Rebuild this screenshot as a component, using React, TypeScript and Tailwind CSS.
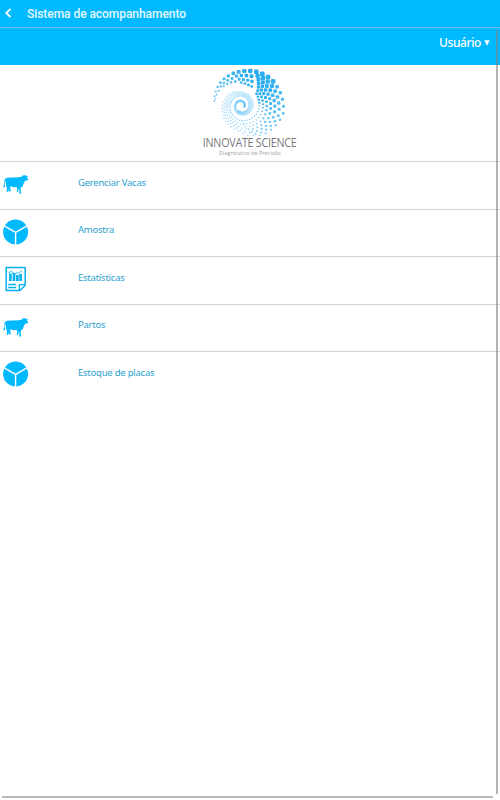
/**
 * Main menu of the herd tracking system
 */
import type { ReactNode } from 'react';

// Outer and inner radius of the logo spiral, by clockwise angle from the left tip
const OUTER = [[0, 27], [40, 31], [80, 34], [130, 40], [180, 43], [220, 37], [270, 25], [340, 19], [440, 13.5], [540, 12], [630, 9], [720, 6], [900, 4], [1080, 2]];
const INNER = [[0, 26], [40, 23], [80, 18], [130, 15], [180, 13], [270, 10], [360, 8], [440, 8], [540, 6], [630, 5], [720, 4], [900, 2.5], [1080, 1.5]];

function radiusAt(table: number[][], angle: number) {
  for (let i = 1; i < table.length; i++) {
    const [a0, r0] = table[i - 1];
    const [a1, r1] = table[i];
    if (angle <= a1) return r0 + ((r1 - r0) * (angle - a0)) / (a1 - a0);
  }
  return table[table.length - 1][1];
}

function spiralDots() {
  const dots: { x: number; y: number; s: number; o: number }[] = [];
  for (let a = 0; a <= 920; a += 9.5) {
    const outer = radiusAt(OUTER, a);
    const inner = radiusAt(INNER, a);
    const rows = a < 25 ? 2 : a < 60 ? 3 : a < 100 ? 4 : a < 230 ? 7 : a < 360 ? 5 : a < 640 ? 4 : 2;
    for (let k = 0; k < rows; k++) {
      const u = k / rows;
      const r = outer - (outer - inner) * u;
      const t = ((a + 190 + k * 4.75) * Math.PI) / 180;
      const peak = Math.exp(-Math.pow((a - 105) / 75, 2));
      const edge = a > 140 && a < 340 ? 0.6 + 0.4 * Math.sin(Math.PI * Math.min(1, u + 0.15)) : 1;
      const s = a < 300 ? Math.max(1.3, r * 0.12 * (0.45 + 0.6 * peak) * edge) : 1.5;
      dots.push({ x: 31 + r * Math.cos(t), y: 37.5 + r * Math.sin(t), s, o: a < 300 ? 0.5 + 0.42 * peak : 0.34 });
    }
  }
  return dots;
}

function Logo() {
  return (
    <svg className="h-[68px] w-[80px]" viewBox="0 0 80 68">
      {spiralDots().map((d, i) => (
        <rect
          key={i}
          x={d.x - d.s / 2}
          y={d.y - d.s / 2}
          width={d.s}
          height={d.s}
          rx={d.s * 0.3}
          fill="#18a5ef"
          opacity={d.o}
        />
      ))}
    </svg>
  );
}

function CowIcon() {
  return (
    <svg className="size-[26px]" viewBox="0 0 26 26" fill="#00b9ff">
      <path
        transform="translate(0 3.8)"
        d="M2.4 3.6 4 2.9 9 2.6 16 2.5 18.4 1.9 19.3 1.5 18.2 1 20.3 1 20.4 0.3 21.6 0.7 23.2 0 22.8 1.3 25 1.5 24 2.6 25.2 4.6 24.6 5.6 22.4 5.8 20.8 8.3 19.8 11.4 17.9 12.8 17.7 15.4 18.4 18.6 16.2 18.6 16.5 16 15.8 13.2 15.3 16.9 13.6 16.9 14.2 14.5 13.6 12.3 10.8 12.5 8.9 12 7.3 11.4 7.2 13.6 8 16.3 6.3 16.6 5.7 13.9 5.5 17 3.7 17 3.9 13.2 3 10.8 2.8 6.2 2.2 6.9 2 11.6 0.8 13 0.1 11.4 1.3 10.4 1.5 5.2Z"
      />
    </svg>
  );
}

function PlateIcon() {
  return (
    <svg className="size-[26px]" viewBox="0 0 26 26">
      <circle cx="12.6" cy="13" r="12.5" fill="#00b9ff" />
      <path d="M1.2 6.8 12.6 13.4 24 6.8M12.6 13.4V26" fill="none" stroke="#fff" strokeWidth="1.4" />
    </svg>
  );
}

function ReportIcon() {
  return (
    <svg className="size-[26px]" viewBox="0 0 26 26" fill="none" stroke="#08b2ef">
      <path d="M3.2 1.5H22.2V19.2L17 24.5H3.2Z" strokeWidth="1.5" strokeLinejoin="round" />
      <path d="M16.4 24.2V18.6H22" strokeWidth="1.4" />
      <path d="M5.2 18.5H13M5.2 21.5H13" strokeWidth="1.3" />
      <path d="M7.4 7.5V15M11 7V15M14.4 9V15M17.6 8V15" strokeWidth="2.7" />
      <path d="M5.5 6.6 8.3 5.4 11.6 7.8 14.2 6.5 15.5 7.5 19 4.6" strokeWidth="0.9" />
    </svg>
  );
}

interface MenuItem {
  label: string;
  icon: ReactNode;
}

const items: MenuItem[] = [
  { label: 'Gerenciar Vacas', icon: <CowIcon /> },
  { label: 'Amostra', icon: <PlateIcon /> },
  { label: 'Estatísticas', icon: <ReportIcon /> },
  { label: 'Partos', icon: <CowIcon /> },
  { label: 'Estoque de placas', icon: <PlateIcon /> },
];

export default function App() {
  return (
    <div className="relative h-[800px] w-[500px] overflow-hidden bg-white">
      <header className="flex h-[27px] items-center bg-[#00b9ff] pl-[5px] text-white">
        <svg className="-mt-px h-[10px] w-[7px]" viewBox="0 0 7 10" fill="none" stroke="currentColor" strokeWidth="1.8">
          <path d="M5.5 1 1.3 5 5.5 9" />
        </svg>
        <h1 className="ml-[15px] font-['Roboto',sans-serif] text-[12px] font-medium tracking-[-0.05px] text-white/90">
          Sistema de acompanhamento
        </h1>
      </header>

      <div className="flex h-[38px] items-start justify-end border-t border-[#66baf0] bg-[#00b9ff] pt-[6px] pr-[10px] text-white">
        <button className="flex items-center gap-[3px] font-['Noto_Sans',sans-serif] text-[12px] leading-[18px] font-medium tracking-[-0.4px]">
          Usuário
          <svg className="h-[6px] w-[6px]" viewBox="0 0 6 6" fill="currentColor">
            <path d="M0.3 0.3H5.7L3 5.8Z" />
          </svg>
        </button>
      </div>

      {/* Brand */}
      <div className="flex h-[96px] flex-col items-center pt-[3px]">
        <Logo />
        <div className="flex h-[13px] items-center justify-center">
          <span className="scale-x-[0.89] font-['Open_Sans',sans-serif] text-[12px] leading-[13px] tracking-[-0.25px] whitespace-nowrap text-[#77777b]">
            INNOVATE SCIENCE
          </span>
        </div>
        <span className="font-['Open_Sans',sans-serif] text-[5.5px] leading-[8px] tracking-[0.04px] text-[#a0a0a4]">
          Diagnóstico de Precisão
        </span>
      </div>

      <nav>
        {items.map((item) => (
          <div key={item.label} className="flex h-[47.5px] items-start border-t border-[#d3d3d3] pl-[3px]">
            <div className="mt-[9px]">{item.icon}</div>
            <span className="mt-[13.5px] ml-[49px] font-['Noto_Sans',sans-serif] text-[9.5px] leading-[14px] tracking-[-0.23px] text-[#2ca2d1]">
              {item.label}
            </span>
          </div>
        ))}
      </nav>

      {/* Scrollbars */}
      <div className="absolute top-[30px] right-[2px] h-[764px] w-[2px] bg-[#808080]/60" />
      <div className="absolute bottom-[2px] left-[2px] h-[2px] w-[491px] bg-[#808080]/55" />
    </div>
  );
}
